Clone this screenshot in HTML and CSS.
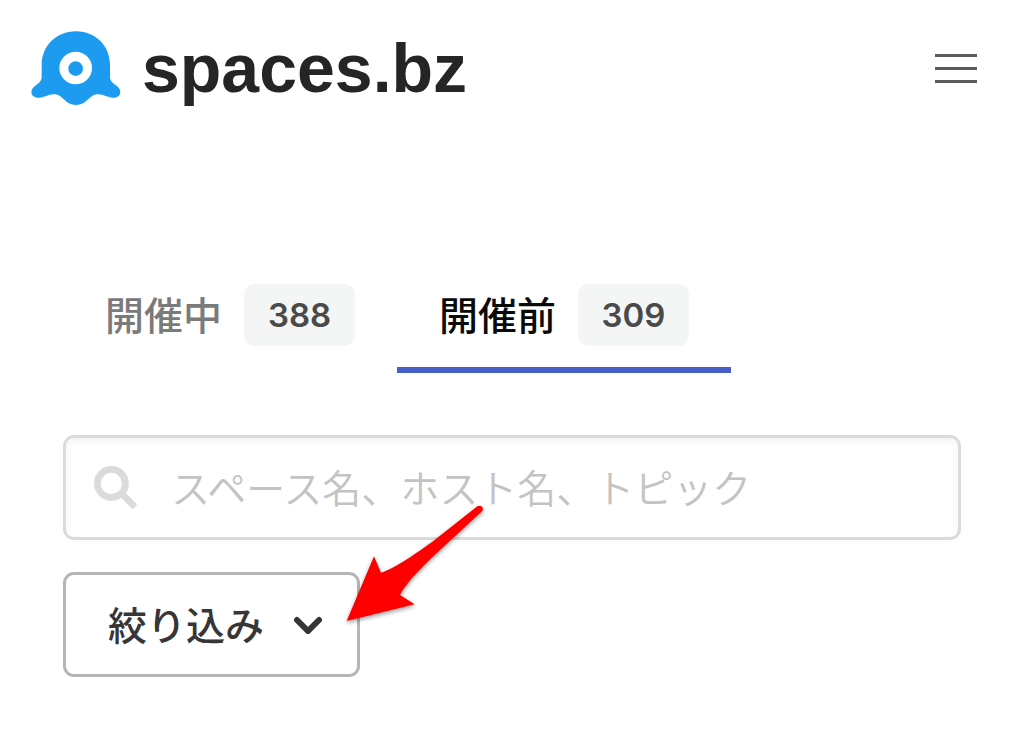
FILE: index.html
```html
<!DOCTYPE html>
<html lang="ja">
<head>
    <meta charset="UTF-8">
    <meta name="viewport" content="width=device-width, initial-scale=1.0">
    <title>spaces.bz</title>
    <link rel="stylesheet" href="styles.css">
</head>
<body>
    <header class="header">
        <a class="logo" href="#">
            <svg class="logo-mark" viewBox="0 0 270 225" aria-hidden="true">
                <path fill="#1d9bf0" d="M135 1C75 1 32 46 32 102V138C32 151 21 158 12 165C-8 181 2 201 24 200C42 199 56 187 74 190C97 194 103 222 135 222C167 222 173 194 196 190C214 187 228 199 246 200C268 201 276 181 258 165C248 158 237 151 237 138V102C237 46 195 1 135 1Z"/>
                <circle cx="134" cy="111" r="49" fill="#fff"/>
                <circle cx="134" cy="113" r="22" fill="#1d9bf0"/>
            </svg>
            <span class="logo-text">spaces.bz</span>
        </a>
        <button class="menu-button" type="button" aria-label="メニュー">
            <span></span>
            <span></span>
            <span></span>
        </button>
    </header>

    <main class="content">
        <nav class="tabs">
            <a class="tab" href="#"><span class="tab-name">開催中</span><span class="badge">388</span></a>
            <a class="tab active" href="#"><span class="tab-name">開催前</span><span class="badge">309</span></a>
        </nav>

        <label class="search">
            <svg class="search-icon" viewBox="0 0 126 126" aria-hidden="true">
                <circle cx="51" cy="51" r="41" fill="none" stroke="#dbdbdb" stroke-width="20"/>
                <path d="M84 84L114 114" stroke="#dbdbdb" stroke-width="18"/>
                <path d="M92 86L120 113L113 120L86 92Z" fill="#dbdbdb" stroke="#dbdbdb" stroke-width="10" stroke-linejoin="round"/>
            </svg>
            <input class="search-input" type="search" aria-label="検索" placeholder="スペース名、ホスト名、トピック">
        </label>

        <div class="filter">
            <button class="filter-button" type="button">
                <span class="filter-name">絞り込み</span>
                <svg class="chevron" viewBox="0 0 28 18" aria-hidden="true">
                    <path d="M3 4L14 15L25 4" fill="none" stroke="#363636" stroke-width="6" stroke-linecap="round"/>
                </svg>
            </button>
            <svg class="arrow" viewBox="0 0 510 450" aria-hidden="true">
                <path fill="#f00" d="M50 393L132 199L153 248C190 238 262 188 310 153L442 49C453 42 464 54 456 64L301 207C260 247 224 286 210 315L254 343Z"/>
            </svg>
        </div>
    </main>
</body>
</html>
```

FILE: styles.css
```css
* {
    box-sizing: border-box;
}
body {
    margin: 0;
    background-color: #fff;
    color: #363636;
    font-family: "Noto Sans CJK JP", sans-serif;
}
.header {
    display: flex;
    justify-content: space-between;
    align-items: center;
    padding: 28px 47px 28px 31px;
}
.logo {
    display: flex;
    align-items: center;
    gap: 21px;
    color: #252525;
    text-decoration: none;
}
.logo-mark {
    width: 90px;
    height: 75px;
}
.logo-text {
    font-family: "Liberation Sans", Arial, sans-serif;
    font-size: 68px;
    font-weight: bold;
    line-height: 80px;
}
.menu-button {
    display: flex;
    flex-direction: column;
    gap: 10px;
    width: 42px;
    padding: 0;
    border: none;
    background: none;
    cursor: pointer;
}
.menu-button span {
    height: 3px;
    background-color: #5c5c5c;
}
.content {
    padding: 126px 63px 70px;
}
.tabs {
    display: flex;
    margin-bottom: 62px;
}
.tab {
    display: flex;
    align-items: center;
    gap: 22px;
    padding: 22px 42px 21px;
    border-bottom: 6px solid transparent;
    color: #7a7a7a;
    font-size: 39px;
    font-weight: 500;
    line-height: 62px;
    text-decoration: none;
}
.tab.active {
    border-bottom-color: #485fc7;
    color: #0a0a0a;
}
.tab-name,
.filter-name {
    line-height: 58px;
    padding-bottom: 4px;
}
.badge {
    min-width: 111px;
    padding: 0 22px;
    border-radius: 10px;
    background-color: #f4f6f6;
    color: #4a4a4a;
    font-family: Inter, sans-serif;
    font-size: 33px;
    font-weight: 600;
    text-align: center;
}
.search {
    display: flex;
    align-items: center;
    gap: 34px;
    height: 105px;
    margin-bottom: 32px;
    padding: 0 28px;
    border: 3px solid #dbdbdb;
    border-radius: 11px;
    box-shadow: inset 0 3px 6px rgba(0, 0, 0, 0.05);
}
.search-icon {
    flex: none;
    width: 43px;
    height: 43px;
}
.search-input {
    flex: 1;
    min-width: 0;
    padding: 0 0 4px;
    border: none;
    outline: none;
    background: none;
    color: #363636;
    font-family: inherit;
    font-size: 39px;
    font-weight: 350;
}
.search-input::placeholder {
    color: #c3c3c3;
}
.filter {
    position: relative;
    width: fit-content;
}
.filter-button {
    display: flex;
    align-items: center;
    gap: 30px;
    height: 105px;
    padding: 0 35px 0 42px;
    border: 3px solid #b5b5b5;
    border-radius: 11px;
    background-color: #fff;
    color: #363636;
    font-family: inherit;
    font-size: 39px;
    font-weight: 500;
    cursor: pointer;
}
.chevron {
    width: 28px;
    height: 18px;
}
/* pointer lying over the search box and the filter button */
.arrow {
    position: absolute;
    top: -82px;
    left: 267px;
    width: 170px;
    height: 150px;
    filter: drop-shadow(0 2px 2px rgba(0, 0, 0, 0.4));
    pointer-events: none;
}
```
